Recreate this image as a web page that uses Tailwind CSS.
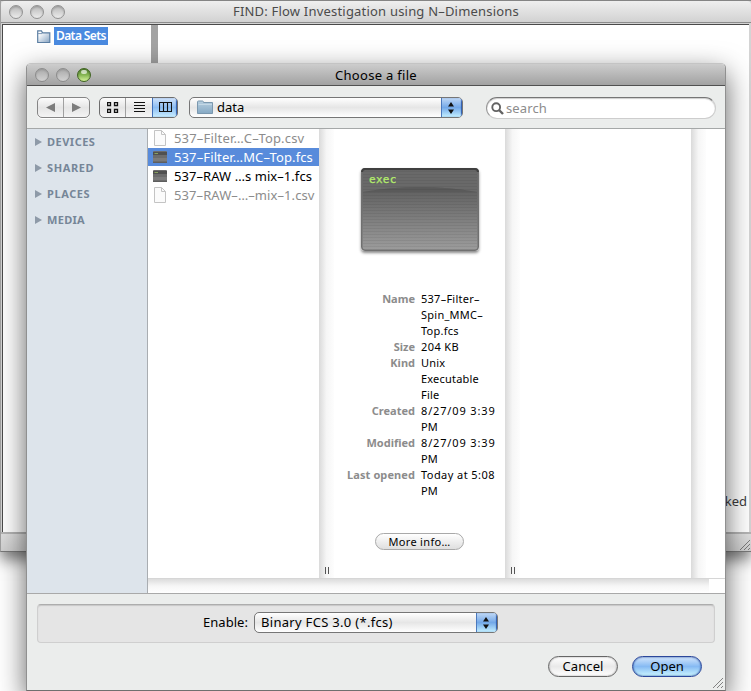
<!DOCTYPE html>
<html lang="en">
<head>
<meta charset="utf-8">
<title>Choose a file</title>
<script src="https://cdn.jsdelivr.net/npm/@tailwindcss/browser@4"></script>
</head>
<body class="relative h-[691px] w-[751px] overflow-hidden bg-white font-['Noto_Sans',sans-serif] text-[13px] leading-[16px] text-black">

<!-- Main window -->
<section class="absolute top-0 left-0 flex h-[552px] w-[751px] flex-col border-t border-l border-t-[#858585] border-l-[#a0a0a0] border-b border-b-[#787878] bg-[#d4d4d4] shadow-[0_8px_14px_rgba(0,0,0,0.5)]">
  <header class="relative flex h-[22px] shrink-0 items-center justify-center rounded-t-sm border-b border-[#8c8c8c] bg-linear-to-b from-[#efefef] to-[#d2d2d2] text-[#4b4b4b]">
    <div class="absolute top-[4px] left-[8px] flex gap-[7px]">
      <i class="size-[14px] rounded-full border border-[#929292] bg-linear-to-b from-[#b9b9b9] to-[#ececec] shadow-[inset_0_1px_2px_#0003]"></i>
      <i class="size-[14px] rounded-full border border-[#929292] bg-linear-to-b from-[#b9b9b9] to-[#ececec] shadow-[inset_0_1px_2px_#0003]"></i>
      <i class="size-[14px] rounded-full border border-[#929292] bg-linear-to-b from-[#b9b9b9] to-[#ececec] shadow-[inset_0_1px_2px_#0003]"></i>
    </div>
    <span class="-mt-px tracking-[0.2px]">FIND: Flow Investigation using N–Dimensions</span>
  </header>
  <div class="mt-px mr-[2px] ml-px flex h-[508px] shrink-0 border-t border-l border-[#4a4a4a] bg-white">
    <div class="flex w-[148px] items-start pt-[2px] pl-[34px]">
      <svg class="mt-[3px] shrink-0" width="14" height="14" viewBox="0 0 14 14"><defs><linearGradient id="fa" x1="0" y1="0" x2="1" y2="1"><stop offset=".2" stop-color="#fff"/><stop offset="1" stop-color="#86a3c2"/></linearGradient></defs><path d="M.7 12.5V.9H4.5L5.5 2.8H12.8V12.5Z" fill="url(#fa)" stroke="#5c7fa3" stroke-width="1.2"/><path d="M1 3.6H5" stroke="#7d98b5"/></svg>
      <span class="ml-[3px] h-[18px] w-[54px] bg-[#4a8ae0] pl-[2px] text-[12px] leading-[17px] font-semibold tracking-[-0.6px] whitespace-nowrap text-white">Data Sets</span>
    </div>
    <div class="w-[7px] bg-[#a3a3a3]"></div>
    <div class="flex flex-1 items-end justify-end pr-[2px] pb-[23px]"><span class="text-[#3c3c3c]">ked</span></div>
  </div>
  <footer class="flex flex-1 items-end justify-end border-t-2 border-[#b4b4b4] bg-linear-to-b from-[#dedede] to-[#cfcfcf]">
    <svg width="12" height="12" viewBox="0 0 12 12" stroke="#7a7a7a"><path d="M1 11L11 1M5 11L11 5M9 11L11 9"/></svg>
  </footer>
</section>

<!-- File chooser -->
<section class="absolute top-[63px] left-[26px] flex h-[628px] w-[700px] flex-col rounded-t-[5px] border border-t-[#c4c4c4] border-r-[#909090] border-b-[#6f6f6f] border-l-[#909090] bg-[#ebedec] shadow-[0_10px_28px_rgba(0,0,0,0.62)]">
  <header class="relative flex h-[22px] shrink-0 items-center justify-center rounded-t-[4px] border-b border-[#515151] bg-linear-to-b from-[#cdcdcd] to-[#a2a2a2]">
    <div class="absolute top-[4px] left-[8px] flex gap-[7px]">
      <i class="size-[14px] rounded-full border border-[#8c8c8c] bg-linear-to-b from-[#ababab] to-[#d2d2d2] shadow-[inset_0_1px_2px_#0002]"></i>
      <i class="size-[14px] rounded-full border border-[#8c8c8c] bg-linear-to-b from-[#ababab] to-[#d2d2d2] shadow-[inset_0_1px_2px_#0002]"></i>
      <i class="relative size-[14px] rounded-full border border-[#3f6420] bg-linear-to-b from-[#5c8f34] via-[#86b653] to-[#d6f59a] shadow-[inset_0_1px_2px_#0004]"><b class="absolute top-px left-[3px] h-[4px] w-[6px] rounded-full bg-white/65"></b></i>
    </div>
    <span class="tracking-[0.3px]">Choose a file</span>
  </header>

  <!-- Toolbar -->
  <div class="flex h-[43px] shrink-0 items-start border-b border-[#a5a8a8] pt-[11px] pl-[10px]">
    <div class="flex h-[21px] w-[53px] rounded-[5px] border border-[#858585] bg-linear-to-b from-[#fcfcfc] via-[#e5e5e5] to-[#f4f4f4] shadow-[0_1px_0_#fff]">
      <span class="flex w-[26px] items-center justify-center border-r border-[#a0a0a0]"><svg width="9" height="9"><path d="M0 4.5L9 0V9Z" fill="#7c7c7c"/></svg></span>
      <span class="flex flex-1 items-center justify-center"><svg width="9" height="9"><path d="M9 4.5L0 0V9Z" fill="#7c7c7c"/></svg></span>
    </div>
    <div class="ml-[9px] flex h-[21px] w-[79px] overflow-hidden rounded-[5px] border border-[#6d6d6d] bg-linear-to-b from-[#fcfcfc] via-[#e5e5e5] to-[#f6f6f6]">
      <span class="flex w-[26px] items-center justify-center border-r border-[#a0a0a0]"><svg width="12" height="11" fill="none" stroke="#111"><path d="M.5 .5H3.5V3.5H.5ZM7.5 .5H10.5V3.5H7.5ZM.5 7.5H3.5V10.5H.5ZM7.5 7.5H10.5V10.5H7.5Z" stroke-width="1.3"/></svg></span>
      <span class="flex w-[26px] items-center justify-center"><svg width="11" height="11" stroke="#111"><path d="M0 .5H11M0 3.5H11M0 6.5H11M0 9.5H11"/></svg></span>
      <span class="flex flex-1 items-center justify-center border-l border-[#3f6fb8] bg-linear-to-b from-[#cfe2fa] via-[#8bbcf2] to-[#c9eeff] shadow-[inset_-1px_0_1px_#2d5bb0]"><svg width="13" height="11" fill="none" stroke="#111" stroke-width="1.1"><path d="M.5 .5H12.5V9.5H.5ZM4.5 .5V9.5M8.5 .5V9.5"/></svg></span>
    </div>
    <div class="ml-[11px] flex h-[21px] w-[274px] overflow-hidden rounded-[5px] border border-[#767676] bg-linear-to-b from-white via-[#e6e6e6] to-white">
      <svg class="mt-[2px] ml-[7px] shrink-0" width="17" height="15" viewBox="0 0 17 15"><defs><linearGradient id="fb" x1="0" y1="0" x2="0" y2="1"><stop offset="0" stop-color="#b7cfe0"/><stop offset="1" stop-color="#86a9c4"/></linearGradient></defs><path d="M.5 13.5V2Q.5 1 1.5 1H5.5Q6.5 1 6.5 2.5H15.5V13.5Z" fill="url(#fb)" stroke="#7b98af"/><path d="M1.5 4.5H15" stroke="#c4d8e6"/></svg>
      <span class="ml-[3px] flex-1 leading-[19px]">data</span>
      <span class="flex w-[21px] items-center justify-center border-l border-[#4b79bd] bg-linear-to-b from-[#c0d8f5] via-[#73a8e8] to-[#c4f0ff] pr-[2px] shadow-[inset_-1px_0_1px_#2d5bb0]"><svg width="6" height="12"><path d="M3 0L6 4.5H0ZM3 12L6 7.5H0Z" fill="#111"/></svg></span>
    </div>
    <div class="ml-[23px] flex h-[22px] w-[230px] items-center rounded-full border border-[#cdcdcd] border-t-[#767676] border-l-[#989898] bg-white shadow-[inset_0_1px_1px_#0003]">
      <svg class="ml-[4px]" width="13" height="13" fill="none" stroke="#626262"><circle cx="5.2" cy="5.2" r="3.9" stroke-width="1.9"/><path d="M8 8L12 12" stroke-width="2.4"/></svg>
      <span class="ml-[2px] tracking-[0.13px] text-[#8c8c8c]">search</span>
    </div>
  </div>

  <!-- Browser -->
  <div class="flex h-[465px] shrink-0 border-b border-[#a9a9a9] bg-white">
    <aside class="flex w-[121px] flex-col gap-[10px] border-r border-[#a9adb1] bg-[#dde4eb] pt-[5px] pl-[8px] text-[11px] font-bold text-[#768698]">
      <div class="flex items-center"><svg class="mr-[5px]" width="7" height="8"><path d="M0 0L7 4L0 8Z" fill="#8e9aa8"/></svg><span class="tracking-[0.5px]">DEVICES</span></div>
      <div class="flex items-center"><svg class="mr-[5px]" width="7" height="8"><path d="M0 0L7 4L0 8Z" fill="#8e9aa8"/></svg><span class="tracking-[0.6px]">SHARED</span></div>
      <div class="flex items-center"><svg class="mr-[5px]" width="7" height="8"><path d="M0 0L7 4L0 8Z" fill="#8e9aa8"/></svg><span class="tracking-[0.6px]">PLACES</span></div>
      <div class="flex items-center"><svg class="mr-[5px]" width="7" height="8"><path d="M0 0L7 4L0 8Z" fill="#8e9aa8"/></svg><span class="tracking-[0.3px]">MEDIA</span></div>
    </aside>
    <div class="flex flex-1 flex-col">
      <div class="flex h-[449px]">
        <ul class="flex w-[171px] flex-col gap-px whitespace-nowrap">
          <li class="flex h-[18px] items-center pl-[5px] text-[#8c8c8c]"><svg class="mr-[7px] shrink-0" width="14" height="16" viewBox="0 0 14 16"><path d="M1.5 .5H8.5L12.5 4.5V15.5H1.5Z" fill="#fbfbfb" stroke="#c4c4c4"/><path d="M8.5 .5V4.5H12.5" fill="none" stroke="#c4c4c4"/></svg><span class="tracking-[0.18px]">537–Filter…C–Top.csv</span></li>
          <li class="flex h-[18px] items-center bg-[#588bdb] pl-[5px] text-white"><svg class="mr-[7px] shrink-0" width="14" height="12" viewBox="0 0 14 12"><rect width="14" height="12" rx="1" fill="#6c6c6c"/><path d="M0 2.5H14" stroke="#505050" stroke-width="3"/><path d="M1.5 2.5H5" stroke="#87a060"/><path d="M0 8.5H14" stroke="#7b7b7b" stroke-width="3"/><path d="M0 11.5H14" stroke="#5e5e5e"/></svg><span class="tracking-[0.12px]">537–Filter…MC–Top.fcs</span></li>
          <li class="flex h-[18px] items-center pl-[5px]"><svg class="mr-[7px] shrink-0" width="14" height="12" viewBox="0 0 14 12"><rect width="14" height="12" rx="1" fill="#6c6c6c"/><path d="M0 2.5H14" stroke="#505050" stroke-width="3"/><path d="M1.5 2.5H5" stroke="#87a060"/><path d="M0 8.5H14" stroke="#7b7b7b" stroke-width="3"/><path d="M0 11.5H14" stroke="#5e5e5e"/></svg><span class="tracking-[0.06px]">537–RAW …s mix–1.fcs</span></li>
          <li class="flex h-[18px] items-center pl-[5px] text-[#8c8c8c]"><svg class="mr-[7px] shrink-0" width="14" height="16" viewBox="0 0 14 16"><path d="M1.5 .5H8.5L12.5 4.5V15.5H1.5Z" fill="#fbfbfb" stroke="#c4c4c4"/><path d="M8.5 .5V4.5H12.5" fill="none" stroke="#c4c4c4"/></svg><span class="tracking-[0.08px]">537–RAW–…–mix–1.csv</span></li>
        </ul>
        <div class="flex w-[15px] items-end justify-center bg-linear-to-r from-[#dadada] via-[#f6f6f6] to-[#fdfdfd] pb-[4px]"><span class="h-[7px] w-[4px] border-x border-[#555]"></span></div>
        <div class="flex w-[171px] flex-col items-center">
          <div class="mt-[39px] h-[83px] w-[118px] shrink-0 rounded-[4px] shadow-[0_2px_3px_#0007]">
            <svg width="118" height="83" viewBox="0 0 118 83">
              <defs>
                <linearGradient id="term" x1="0" y1="0" x2="0" y2="1"><stop offset="0" stop-color="#666"/><stop offset=".28" stop-color="#636363"/><stop offset="1" stop-color="#9c9c9c"/></linearGradient>
                <pattern id="lines" width="4" height="3" patternUnits="userSpaceOnUse"><path d="M0 .5H4" stroke="#000" stroke-opacity=".06"/></pattern>
              </defs>
              <rect x=".75" y=".75" width="116.5" height="81.5" rx="3.5" fill="url(#term)" stroke="#707070" stroke-width="1.5"/>
              <path d="M2 3H116V24Q59 14 2 24Z" fill="#696969"/>
              <path d="M2 24Q59 14 116 24Z" fill="#5a5a5a"/>
              <rect x="2" y="3" width="114" height="78" fill="url(#lines)"/>
              <path d="M1 4Q1 1 4 1H114Q117 1 117 4" fill="none" stroke="#404040" stroke-width="2"/>
              <text x="8" y="15" font-family="DejaVu Sans Mono, monospace" font-size="11" letter-spacing=".3" fill="#b4ee6c" stroke="#b4ee6c" stroke-width=".25">exec</text>
            </svg>
          </div>
          <dl class="mt-[40px] grid w-full grid-cols-[81px_78px] gap-x-[6px] text-[11px] leading-[16px] [&>dt]:text-right [&>dt]:font-bold [&>dt]:whitespace-nowrap [&>dt]:text-[#8c8c8c]">
            <dt>Name</dt><dd class="tracking-[0.25px]">537–Filter–<br>Spin_MMC–<br>Top.fcs</dd>
            <dt>Size</dt><dd class="tracking-[0.4px]">204 KB</dd>
            <dt>Kind</dt><dd class="tracking-[0.2px]">Unix<br>Executable<br>File</dd>
            <dt>Created</dt><dd><span class="tracking-[0.85px] whitespace-nowrap">8/27/09 3:39</span><br>PM</dd>
            <dt>Modified</dt><dd><span class="tracking-[0.85px] whitespace-nowrap">8/27/09 3:39</span><br>PM</dd>
            <dt class="tracking-[0.09px]">Last opened</dt><dd><span class="tracking-[0.44px] whitespace-nowrap">Today at 5:08</span><br>PM</dd>
          </dl>
          <button class="mt-[34px] h-[17px] w-[89px] shrink-0 rounded-full border border-[#a9a9a9] bg-linear-to-b from-white to-[#dfdfdf] text-[11px] leading-[15px] tracking-[0.32px]">More info…</button>
        </div>
        <div class="flex w-[15px] items-end justify-center bg-linear-to-r from-[#dadada] via-[#f6f6f6] to-[#fdfdfd] pb-[4px]"><span class="h-[7px] w-[4px] border-x border-[#555]"></span></div>
        <div class="w-[171px]"></div>
        <div class="w-[15px] bg-linear-to-r from-[#dadada] via-[#f6f6f6] to-[#fdfdfd]"></div>
      </div>
      <div class="flex flex-1 border-t border-[#d6d6d6]"><div class="w-[561px] bg-linear-to-b from-[#dcdcdc] via-[#f6f6f6] to-white"></div></div>
    </div>
  </div>

  <!-- Filter -->
  <div class="mx-[10px] mt-[10px] flex h-[39px] shrink-0 items-start rounded-[4px] border border-[#cfcfcf] border-t-[#adadad] bg-[#e5e5e5] pt-[7px] pl-[165px] shadow-[inset_0_1px_1px_#0002]">
    <span class="w-[51px] leading-[21px] tracking-[0.04px]">Enable:</span>
    <div class="flex h-[21px] w-[244px] overflow-hidden rounded-[5px] border border-[#767676] bg-linear-to-b from-white via-[#e6e6e6] to-white">
      <span class="flex-1 pl-[6px] leading-[19px] tracking-[0.3px]">Binary FCS 3.0 (*.fcs)</span>
      <span class="flex w-[21px] items-center justify-center border-l border-[#4b79bd] bg-linear-to-b from-[#c0d8f5] via-[#73a8e8] to-[#c4f0ff] pr-[2px] shadow-[inset_-1px_0_1px_#2d5bb0]"><svg width="6" height="12"><path d="M3 0L6 4.5H0ZM3 12L6 7.5H0Z" fill="#111"/></svg></span>
    </div>
  </div>

  <footer class="flex flex-1 items-start justify-end gap-[14px] pt-[13px] pr-[23px]">
    <button class="h-[21px] w-[70px] rounded-full border border-[#666] bg-linear-to-b from-white via-[#e9e9e9] to-white leading-[19px] tracking-[0.1px] shadow-[inset_0_0_2px_#0006]">Cancel</button>
    <button class="h-[21px] w-[70px] rounded-full border border-[#2b479b] bg-linear-to-b from-[#d3e5fb] via-[#86baf3] to-[#ccf6ff] leading-[19px] shadow-[inset_0_0_2px_#123b8a]">Open</button>
  </footer>
  <svg class="absolute right-px bottom-px" width="12" height="12" viewBox="0 0 12 12" stroke="#828282"><path d="M1 11L11 1M5 11L11 5M9 11L11 9"/></svg>
</section>
</body>
</html>
